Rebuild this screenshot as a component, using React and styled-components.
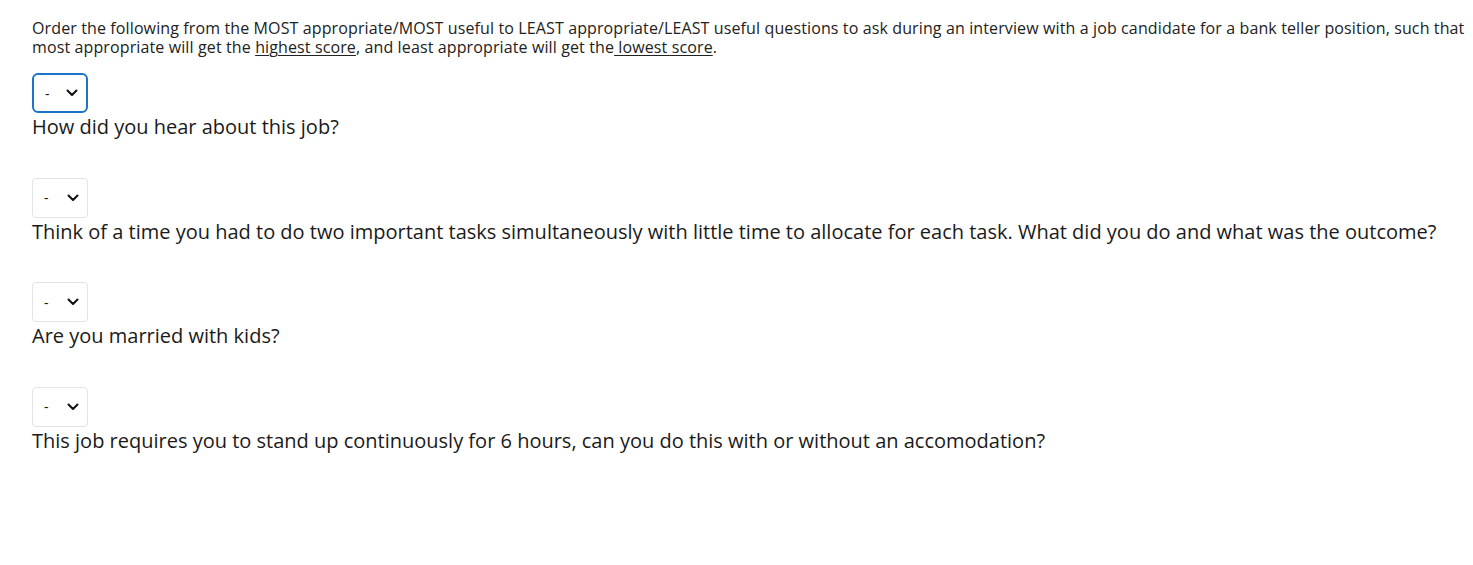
import React from 'react';
import styled, { createGlobalStyle } from 'styled-components';

const GlobalStyle = createGlobalStyle`
  body {
    margin: 0;
    background: #fff;
    font-family: "Open Sans", "Noto Sans", sans-serif;
  }
`;

const questions = [
  'How did you hear about this job?',
  'Think of a time you had to do two important tasks simultaneously with little time to allocate for each task. What did you do and what was the outcome?',
  'Are you married with kids?',
  'This job requires you to stand up continuously for 6 hours, can you do this with or without an accomodation?',
];

export default function App() {
  return (
    <>
      <GlobalStyle />
      <Page>
        <Intro>
          Order the following from the MOST appropriate/MOST useful to LEAST appropriate/LEAST useful questions to ask during an interview with a job candidate for a bank teller position, such that most appropriate will get the <u>highest score</u>, and least appropriate will get the<u> lowest score</u>.
        </Intro>
        <List>
          {questions.map((q, i) => (
            <Item key={i}>
              <SelectWrap $focused={i === 0}>
                <Select defaultValue="-">
                  <option>-</option>
                  <option>1</option>
                  <option>2</option>
                  <option>3</option>
                  <option>4</option>
                </Select>
                <Chevron viewBox="0 0 12 8" aria-hidden="true">
                  <path d="M1.5 1.5 L6 6 L10.5 1.5" fill="none" stroke="#111" strokeWidth="2" strokeLinecap="round" strokeLinejoin="round" />
                </Chevron>
              </SelectWrap>
              <Question>{q}</Question>
            </Item>
          ))}
        </List>
      </Page>
    </>
  );
}

const Page = styled.div`
  padding: 19px 0 0 32px;
`;

const Intro = styled.p`
  margin: 0;
  font-size: 16px;
  line-height: 19px;
  letter-spacing: 0.12px;
  color: #222;

  u {
    text-decoration-thickness: 1px;
    text-underline-offset: 2px;
  }
`;

const List = styled.div`
  margin-top: 16px;
  display: flex;
  flex-direction: column;
  gap: 37.5px;
`;

const Item = styled.div`
  display: flex;
  flex-direction: column;
  align-items: flex-start;
`;

const SelectWrap = styled.div`
  position: relative;
  width: 56px;
  height: 40px;
  box-sizing: border-box;
  border-radius: ${p => (p.$focused ? '6px' : '4px')};
  border: ${p => (p.$focused ? '2px solid #1a73c8' : '1px solid #e3e3e3')};
  background: #fff;
`;

const Select = styled.select`
  appearance: none;
  border: none;
  outline: none;
  background: transparent;
  width: 100%;
  height: 100%;
  padding: 0 0 0 11px;
  font-family: "Open Sans", sans-serif;
  font-size: 14px;
  color: #111;
`;

const Chevron = styled.svg`
  position: absolute;
  right: 8px;
  top: 50%;
  width: 12px;
  height: 8px;
  margin-top: -4px;
  pointer-events: none;
`;

const Question = styled.div`
  font-size: 20px;
  line-height: 27px;
  color: #1a1a1a;
`;
